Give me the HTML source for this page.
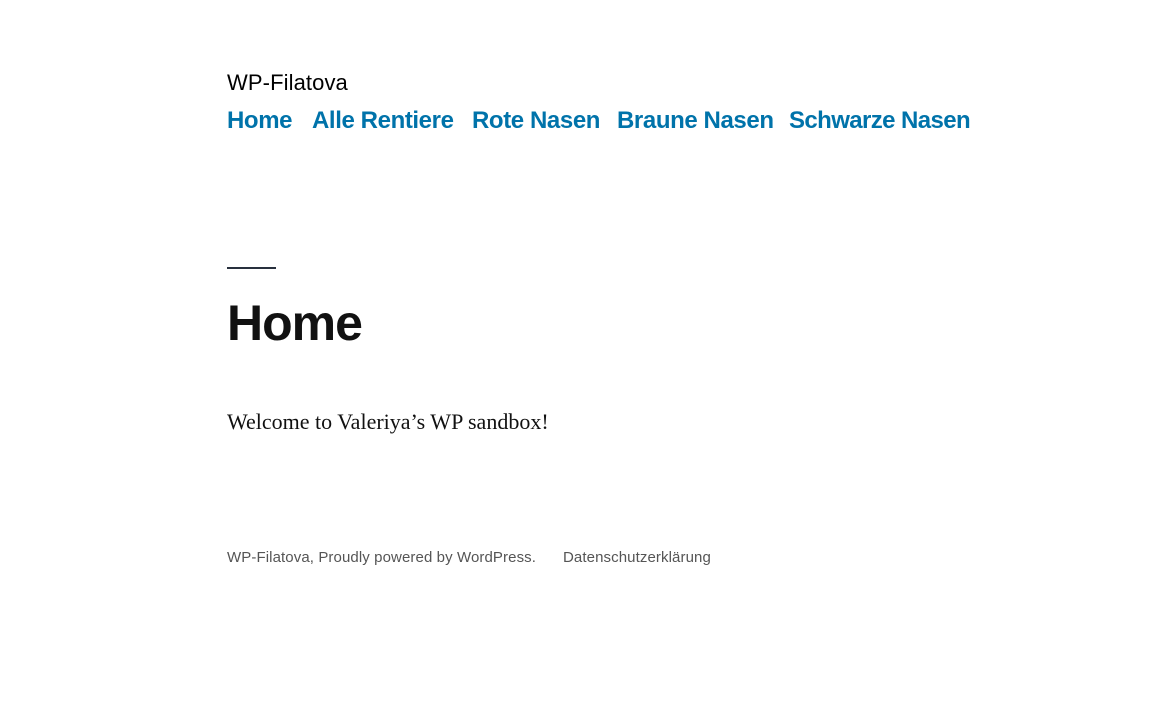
<!DOCTYPE html>
<html><head><meta charset="utf-8"><style>
body{margin:0;background:#fff;width:1151px;height:717px;overflow:hidden;font-family:"Liberation Sans",sans-serif;}
.site{position:absolute;left:227px;top:70px;font-size:22px;color:#000;white-space:nowrap;letter-spacing:0.1px}
.nav span{position:absolute;top:107px;font-size:24px;font-weight:bold;color:#0073aa;white-space:nowrap;letter-spacing:-0.4px}
.hr{position:absolute;left:227px;top:267px;width:49px;height:2px;background:#28303d}
h1{position:absolute;left:227px;top:294px;margin:0;font-size:50px;font-weight:bold;color:#111;letter-spacing:-1px}
.p{position:absolute;left:227px;top:409px;font-family:"Liberation Serif",serif;font-size:22px;color:#111}
.f{position:absolute;top:549px;font-size:15px;color:#555;white-space:nowrap;letter-spacing:0.1px}
</style></head><body>
<div class="site">WP-Filatova</div>
<div class="nav"><span style="left:227px">Home</span><span style="left:312px">Alle Rentiere</span><span style="left:472px">Rote Nasen</span><span style="left:617px">Braune Nasen</span><span style="left:789px;letter-spacing:-0.6px">Schwarze Nasen</span></div>
<div class="hr"></div>
<h1>Home</h1>
<div class="p">Welcome to Valeriya’s WP sandbox!</div>
<div class="f" style="left:227px">WP-Filatova, Proudly powered by WordPress.</div>
<div class="f" style="left:563px">Datenschutzerklärung</div>
</body></html>
